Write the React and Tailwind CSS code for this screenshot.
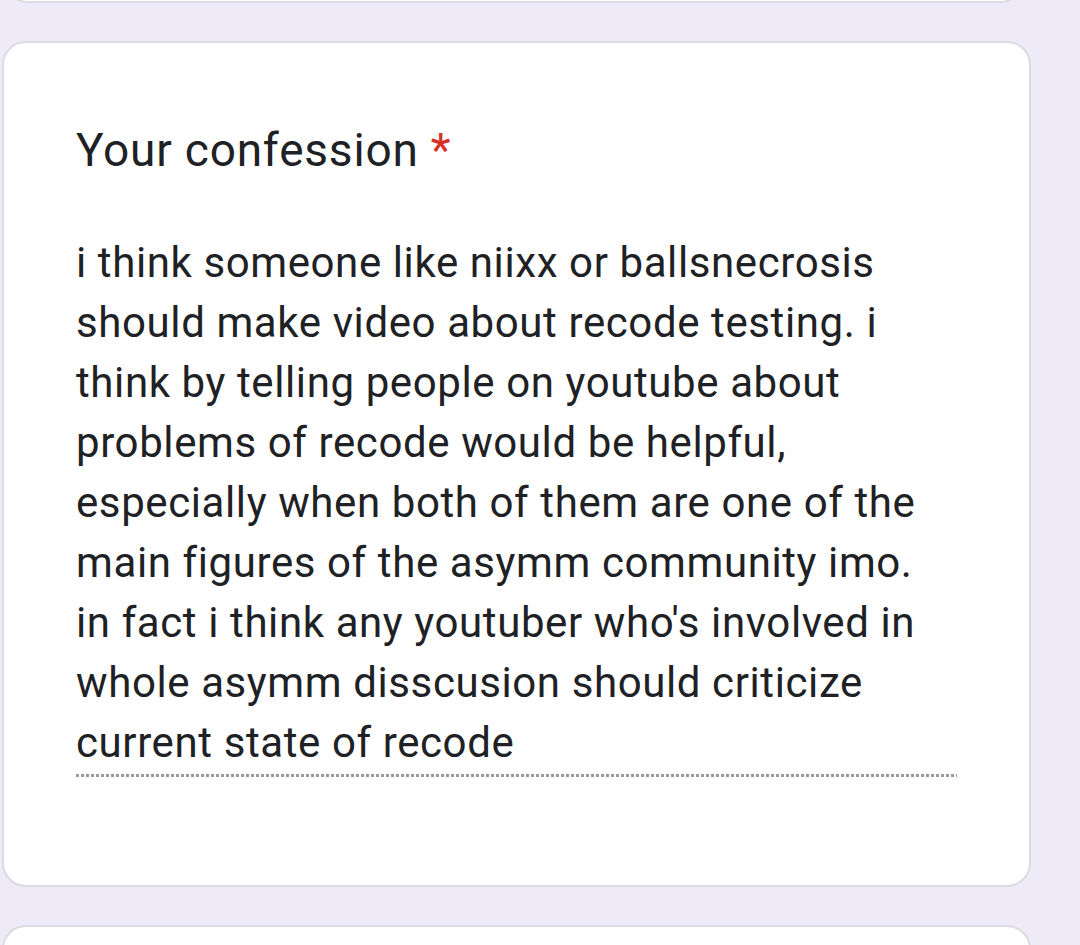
import React from "react";

const lines = [
  "i think someone like niixx or ballsnecrosis",
  "should make video about recode testing. i",
  "think by telling people on youtube about",
  "problems of recode would be helpful,",
  "especially when both of them are one of the",
  "main figures of the asymm community imo.",
  "in fact i think any youtuber who's involved in",
  "whole asymm disscusion should criticize",
  "current state of recode",
];

const App = () => {
  return (
    <div
      className="w-[1080px] h-[945px] overflow-hidden bg-[#eeeaf7]"
      style={{ fontFamily: "Roboto, 'Noto Sans', sans-serif" }}
    >
      {/* previous card, only its bottom edge shows */}
      <div className="ml-[7px] w-[1014px] h-[40px] -mt-[37px] bg-white border-2 border-[#dadce0] rounded-[24px]" />

      {/* question card */}
      <div className="mt-[38px] ml-[2px] w-[1029px] h-[846px] bg-white border-2 border-[#dadce0] rounded-[24px] pl-[72px] pr-[72px] pt-[77px]">
        <h2 className="text-[46px] leading-[60px] tracking-[0.8px] text-[#202124]">
          Your confession <span className="text-[#d93025]">*</span>
        </h2>
        <div className="mt-[53px] w-[881px]">
          <p className="text-[42px] leading-[60px] tracking-[0.6px] text-[#202124] whitespace-nowrap">
            {lines.map((l, i) => (
              <span key={i} className="block">
                {l}
              </span>
            ))}
          </p>
          <div className="mt-[1px] h-[3px] bg-[repeating-linear-gradient(to_right,#9a9a9a_0_3px,transparent_3px_5px)]" />
        </div>
      </div>

      {/* next card */}
      <div className="mt-[38px] ml-[2px] w-[1029px] h-[60px] bg-white border-2 border-[#dadce0] rounded-[24px]" />
    </div>
  );
};

export default App;
